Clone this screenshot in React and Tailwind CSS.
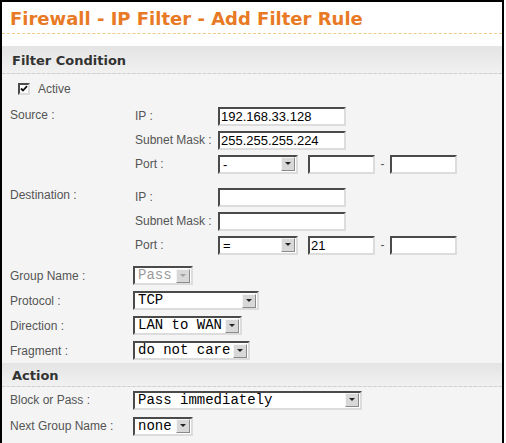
import React from 'react'

const sans = { fontFamily: '"Liberation Sans", Arial, sans-serif' }

function TextBox({ value = '', width = 'w-[128px]' }) {
  return (
    <div
      className={`${width} h-[19px] bg-white border-2 border-t-[#4a4a4a] border-l-[#4a4a4a] border-r-[#dcdcdc] border-b-[#dcdcdc] text-[13px] leading-[15px] text-black pl-[1px] overflow-hidden`}
      style={sans}
    >
      {value}
    </div>
  )
}

function DropDown({ value, width, mono = true, disabled = false }) {
  return (
    <div
      className={`${width} h-[19px] flex items-center bg-white border-2 border-t-[#4a4a4a] border-l-[#4a4a4a] border-r-[#dcdcdc] border-b-[#dcdcdc]`}
    >
      <span
        className={`flex-1 pl-[3px] whitespace-pre overflow-hidden ${mono ? 'text-[14px]' : 'text-[13px]'} leading-[15px] ${disabled ? 'text-[#9a9a9a]' : 'text-black'}`}
        style={{ fontFamily: mono ? '"Liberation Mono", "Courier New", monospace' : '"Liberation Sans", Arial, sans-serif' }}
      >
        {value}
      </span>
      <span className="w-[14px] h-[14px] mr-[1px] flex items-center justify-center bg-[#d8d8d8] border border-t-[#f4f4f4] border-l-[#f4f4f4] border-r-[#8a8a8a] border-b-[#8a8a8a]">
        <svg width="6" height="4" viewBox="0 0 6 4">
          <path d="M0 0 H6 L3 3 Z" fill={disabled ? '#a0a0a0' : '#222'} />
        </svg>
      </span>
    </div>
  )
}

function Label({ children, className = '' }) {
  return (
    <span className={`text-[12px] text-[#555] ${className}`} style={sans}>
      {children}
    </span>
  )
}

function SectionHead({ title, height }) {
  return (
    <div className={`${height} flex items-center pl-[10px] pt-[2px] bg-gradient-to-b from-[#e4e4e4] to-[#f1f1f1] border-b border-dashed border-[#cfcfcf]`}>
      <span className="text-[13px] font-bold text-[#333]" style={{ fontFamily: '"DejaVu Sans", Verdana, sans-serif' }}>
        {title}
      </span>
    </div>
  )
}

function SubRow({ label, children }) {
  return (
    <div className="h-[24px] flex items-center">
      <Label className="w-[83px]">{label}</Label>
      {children}
    </div>
  )
}

function FieldRow({ label, height = 'h-[25px]', children }) {
  return (
    <div className={`${height} flex items-center`}>
      <Label className="w-[123px]">{label}</Label>
      {children}
    </div>
  )
}

function PortRow({ op, from }) {
  return (
    <SubRow label="Port :">
      <DropDown value={op} width="w-[80px]" mono={false} />
      <div className="ml-[10px]"><TextBox value={from} width="w-[67px]" /></div>
      <span className="w-[15px] text-center text-[12px] text-[#555]" style={sans}>-</span>
      <TextBox width="w-[67px]" />
    </SubRow>
  )
}

export default function App() {
  return (
    <div className="w-[506px] h-[443px] overflow-hidden bg-white">
      <div className="w-[504px] h-[460px] border-2 border-black bg-[#f4f4f4]">
        <div className="bg-white pb-[12px]">
          <div className="h-[32px] flex items-center pl-[8px] pt-[2px] border-b border-dashed border-[#efc98a]">
            <h1 className="text-[18px] font-bold text-[#e87a26]" style={{ fontFamily: '"DejaVu Sans", Verdana, sans-serif' }}>
              Firewall - IP Filter - Add Filter Rule
            </h1>
          </div>
        </div>

        <SectionHead title="Filter Condition" height="h-[28px]" />

        <div className="px-[8px]">
          <div className="h-[30px] flex items-center pl-[8px] gap-[8px]">
            <span className="w-[12px] h-[12px] bg-white border-2 border-t-[#4a4a4a] border-l-[#4a4a4a] border-r-[#dcdcdc] border-b-[#dcdcdc] flex items-center justify-center">
              <svg width="8" height="8" viewBox="0 0 8 8">
                <path d="M1 3.5 L3 5.5 L7 1.2" stroke="#111" strokeWidth="1.8" fill="none" />
              </svg>
            </span>
            <Label>Active</Label>
          </div>

          <div className="flex">
            <Label className="w-[125px] pt-[2px]">Source :</Label>
            <div className="flex flex-col">
              <SubRow label="IP :"><TextBox value="192.168.33.128" /></SubRow>
              <SubRow label="Subnet Mask :"><TextBox value="255.255.255.224" /></SubRow>
              <PortRow op="-" from="" />
            </div>
          </div>

          <div className="flex mt-[9px]">
            <Label className="w-[125px] pt-[1px]">Destination :</Label>
            <div className="flex flex-col">
              <SubRow label="IP :"><TextBox /></SubRow>
              <SubRow label="Subnet Mask :"><TextBox /></SubRow>
              <PortRow op="=" from="21" />
            </div>
          </div>

          <div className="mt-[6px]">
            <FieldRow label="Group Name :"><DropDown value="Pass" width="w-[60px]" disabled /></FieldRow>
            <FieldRow label="Protocol :"><DropDown value="TCP" width="w-[126px]" /></FieldRow>
            <FieldRow label="Direction :"><DropDown value="LAN to WAN" width="w-[109px]" /></FieldRow>
            <FieldRow label="Fragment :"><DropDown value="do not care" width="w-[117px]" /></FieldRow>
          </div>
        </div>

        <SectionHead title="Action" height="h-[24px]" />

        <div className="px-[8px]">
          <FieldRow label="Block or Pass :" height="h-[26px]"><DropDown value="Pass immediately" width="w-[229px]" /></FieldRow>
          <FieldRow label="Next Group Name :" height="h-[26px]"><DropDown value="none" width="w-[60px]" /></FieldRow>
        </div>
      </div>
    </div>
  )
}
